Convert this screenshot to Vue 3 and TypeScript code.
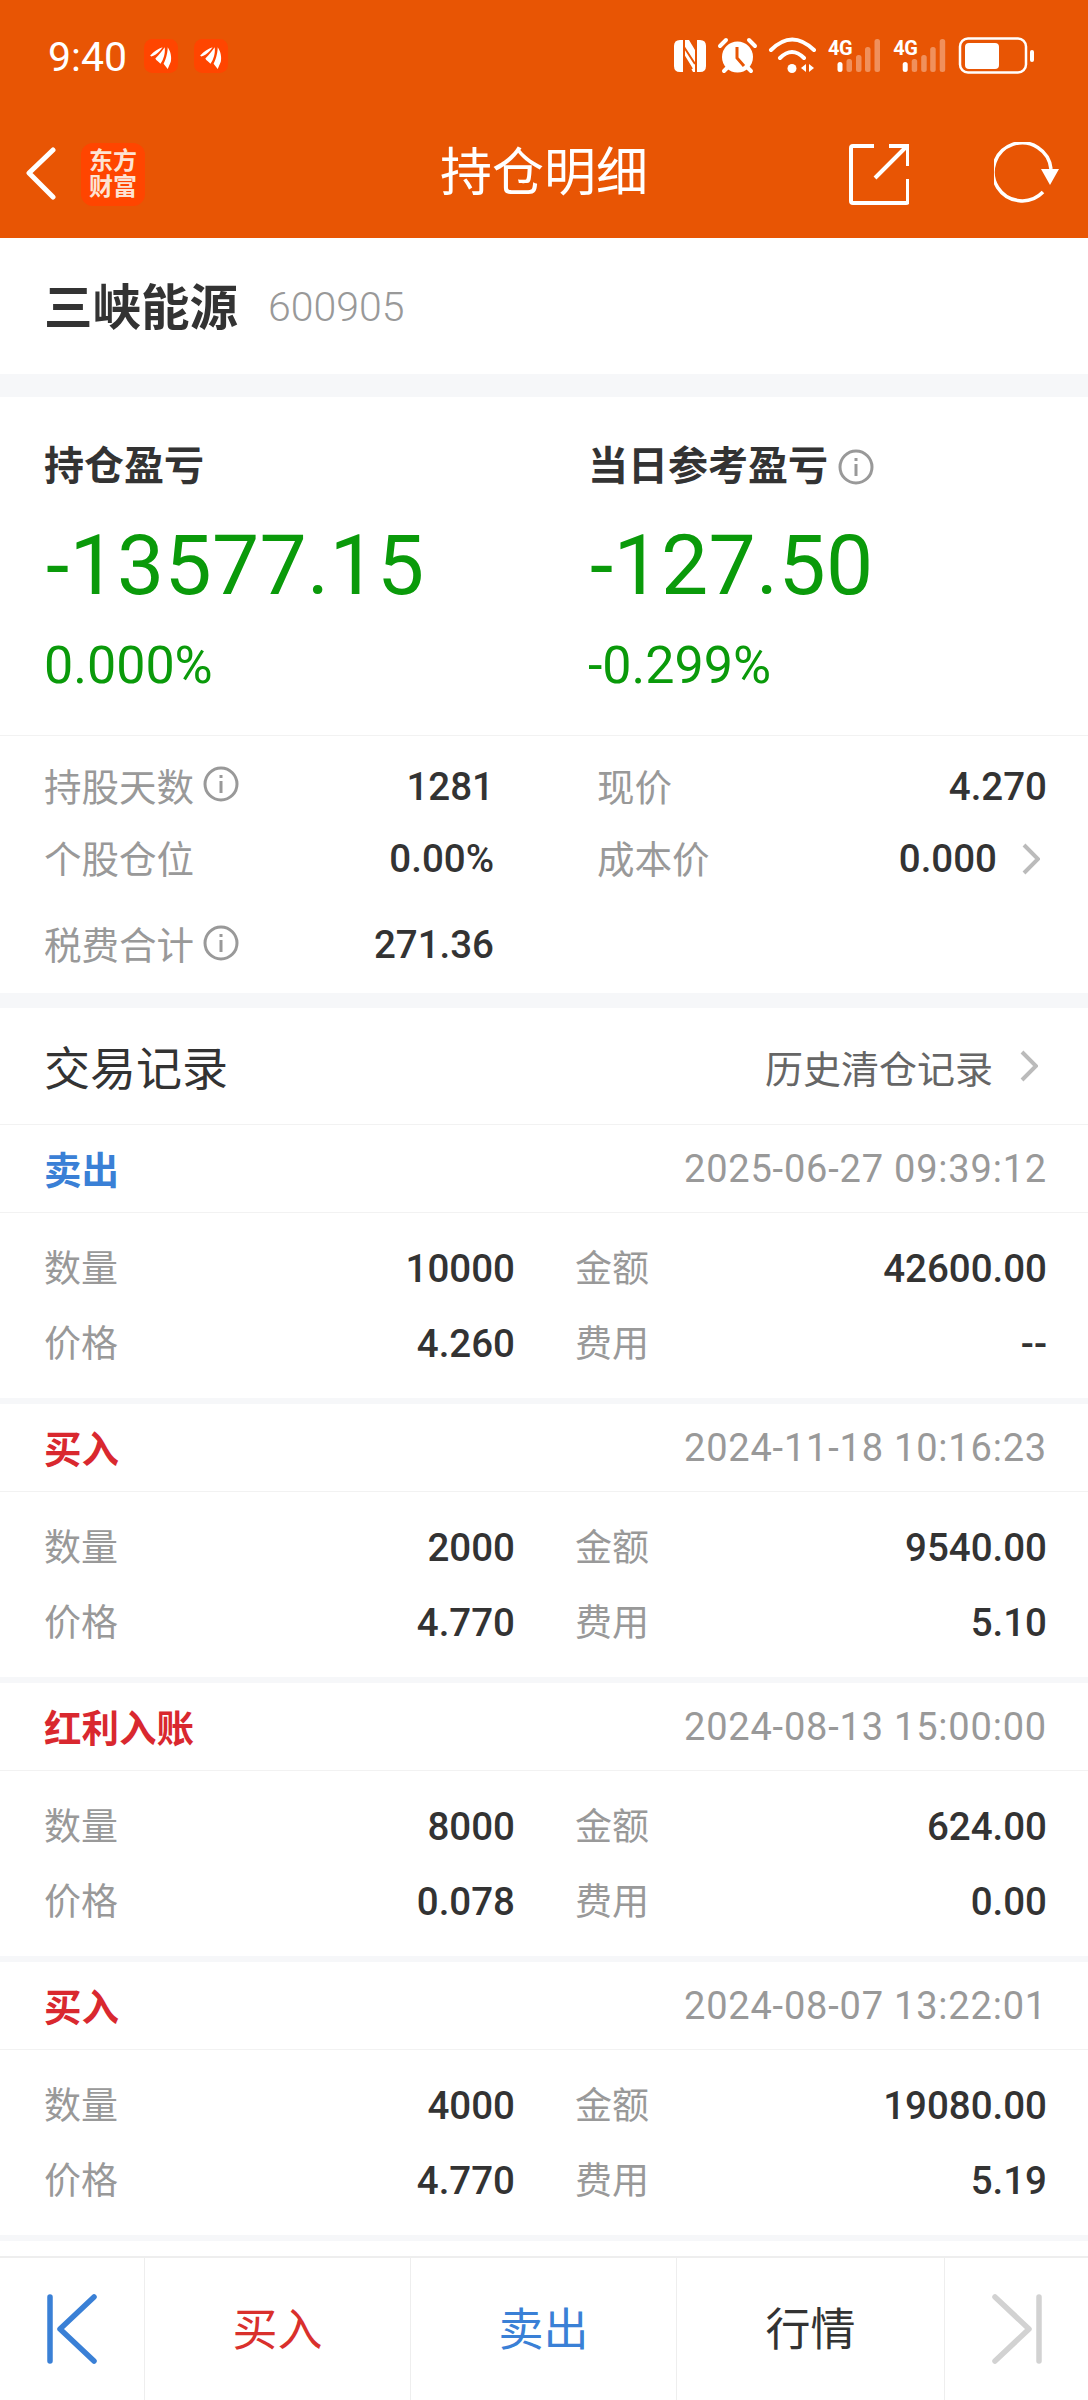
<script setup lang="ts">
interface Trade {
  type: string
  kind: 'buy' | 'sell'
  time: string
  qty: string
  amount: string
  price: string
  fee: string
}

const trades: Trade[] = [
  { type: '卖出', kind: 'sell', time: '2025-06-27 09:39:12', qty: '10000', amount: '42600.00', price: '4.260', fee: '--' },
  { type: '买入', kind: 'buy', time: '2024-11-18 10:16:23', qty: '2000', amount: '9540.00', price: '4.770', fee: '5.10' },
  { type: '红利入账', kind: 'buy', time: '2024-08-13 15:00:00', qty: '8000', amount: '624.00', price: '0.078', fee: '0.00' },
  { type: '买入', kind: 'buy', time: '2024-08-07 13:22:01', qty: '4000', amount: '19080.00', price: '4.770', fee: '5.19' }
]

// 信号格的 x 偏移
const signalOffsets = [0, 65.2]
</script>

<template>
  <div class="page">
    <header class="top">
      <div class="status">
        <span class="clock">9:40</span>
        <svg v-for="n in 2" :key="n" class="notify" viewBox="0 0 33 33">
          <rect width="33" height="33" rx="8" fill="#ff4500" />
          <path d="M6 16C10 12 14 9 18 8C16 11 13 15 7 17Z" fill="#fff" />
          <path d="M11 19C15 15 18 11 20 8C21 13 19 20 16 24C14 22 12 21 11 19Z" fill="#fff" />
          <path d="M19 24C22 18 23 12 23 8C26 12 27 18 26 22L23 29Z" fill="#fff" />
        </svg>
        <svg class="status-icons" viewBox="668 32 368 48">
          <!-- NFC -->
          <path d="M680 40h3v32h-3q-6 0-6-6V46q0-6 6-6Z" fill="#fff" />
          <path d="M700 40h-3v32h3q6 0 6-6V46q0-6-6-6Z" fill="#fff" />
          <path d="M685 40h4l6 10v22h-2l-8-14Z" fill="#fff" />
          <path d="M684 47l11 17M684 56l8 13" stroke="#e85504" stroke-width="2" fill="none" />
          <!-- alarm -->
          <circle cx="737.5" cy="57" r="15.5" fill="#fff" />
          <path d="M737 47v11l7 8" stroke="#e85504" stroke-width="3" fill="none" />
          <path d="M720 46l6-6M749 40l6 6M724 71l4-4M751 71l-4-4" stroke="#fff" stroke-width="4" stroke-linecap="round" />
          <!-- wifi -->
          <path d="M771 50Q792 29 814 50M780 58Q792 46 804 58" stroke="#fff" stroke-width="4" stroke-linecap="round" fill="none" />
          <circle cx="792" cy="68.5" r="4.5" fill="#fff" />
          <path d="M806 64v8l-5-4ZM809 64v8l5-4Z" fill="#fff" />
          <!-- 4G + signal -->
          <g v-for="dx in signalOffsets" :key="dx" :transform="`translate(${dx} 0)`">
            <text x="828" y="55" class="net">4G</text>
            <rect x="837.5" y="62" width="5" height="10" rx="2.5" fill="#fff" />
            <g fill="#fff" opacity="0.35">
              <rect x="846.5" y="59" width="5.5" height="13" rx="2.5" />
              <rect x="856" y="55" width="5.5" height="17" rx="2.5" />
              <rect x="865" y="47" width="5.5" height="25" rx="2.5" />
              <rect x="874.5" y="39" width="5.5" height="33" rx="2.5" />
            </g>
          </g>
          <!-- battery -->
          <rect x="960" y="38.5" width="66" height="34" rx="8" fill="none" stroke="#fff" stroke-width="2.5" />
          <rect x="965" y="43" width="34" height="26" rx="4" fill="#fff" />
          <rect x="1030" y="50" width="4" height="12" rx="2" fill="#fff" />
        </svg>
      </div>
      <nav class="nav">
        <div class="nav-left">
          <svg class="back" viewBox="0 0 30 54">
            <path d="M27 3L3 26L27 50" fill="none" stroke="#fff" stroke-width="5" stroke-linecap="round" stroke-linejoin="round" />
          </svg>
          <div class="logo"><span>东方</span><span>财富</span></div>
        </div>
        <div class="nav-title">持仓明细</div>
        <div class="nav-right">
          <svg class="share" viewBox="0 0 60 62">
            <path d="M25 3H4Q2 3 2 5V58Q2 60 4 60H57Q59 60 59 58V36" fill="none" stroke="#fff" stroke-width="4" />
            <path d="M26 35L58 3M40 3H59V23" fill="none" stroke="#fff" stroke-width="4" />
          </svg>
          <svg class="refresh" viewBox="0 0 66 64">
            <path d="M49 50A29 29 0 1 1 57 27" fill="none" stroke="#fff" stroke-width="3.5" />
            <path d="M47 27H65L56 43Z" fill="#fff" />
          </svg>
        </div>
      </nav>
    </header>

    <section class="name-row">
      <span class="stock-name">三峡能源</span>
      <span class="stock-code">600905</span>
    </section>

    <section class="summary">
      <div class="summary-col">
        <div class="summary-label">持仓盈亏</div>
        <div class="big">-13577.15</div>
        <div class="pct">0.000%</div>
      </div>
      <div class="summary-col">
        <div class="summary-label">
          当日参考盈亏
          <svg class="info" viewBox="0 0 36 36">
            <circle cx="18" cy="18" r="16" />
            <path d="M18 15v12M18 9v3" />
          </svg>
        </div>
        <div class="big">-127.50</div>
        <div class="pct">-0.299%</div>
      </div>
    </section>

    <section class="stats">
      <div class="stat">
        <span class="stat-label">持股天数
          <svg class="info" viewBox="0 0 36 36"><circle cx="18" cy="18" r="16" /><path d="M18 15v12M18 9v3" /></svg>
        </span>
        <span class="num">1281</span>
      </div>
      <div class="stat">
        <span class="stat-label">现价</span>
        <span class="num">4.270</span>
      </div>
      <div class="stat">
        <span class="stat-label">个股仓位</span>
        <span class="num">0.00%</span>
      </div>
      <div class="stat">
        <span class="stat-label">成本价</span>
        <span class="num with-chevron">0.000
          <svg class="chevron" viewBox="0 0 18 32"><path d="M2 2L16 16L2 30" /></svg>
        </span>
      </div>
      <div class="stat stat-tax">
        <span class="stat-label">税费合计
          <svg class="info" viewBox="0 0 36 36"><circle cx="18" cy="18" r="16" /><path d="M18 15v12M18 9v3" /></svg>
        </span>
        <span class="num">271.36</span>
      </div>
    </section>

    <section class="records">
      <div class="records-head">
        <span class="records-title">交易记录</span>
        <span class="records-link">历史清仓记录
          <svg class="chevron" viewBox="0 0 18 32"><path d="M2 2L16 16L2 30" /></svg>
        </span>
      </div>
      <article v-for="item in trades" :key="item.time" class="trade">
        <div class="trade-head">
          <span class="trade-type" :class="item.kind">{{ item.type }}</span>
          <span class="trade-time">{{ item.time }}</span>
        </div>
        <div class="trade-body">
          <div class="cell"><span class="cell-label">数量</span><span class="num">{{ item.qty }}</span></div>
          <div class="cell"><span class="cell-label">金额</span><span class="num">{{ item.amount }}</span></div>
          <div class="cell"><span class="cell-label">价格</span><span class="num">{{ item.price }}</span></div>
          <div class="cell"><span class="cell-label">费用</span><span class="num">{{ item.fee }}</span></div>
        </div>
      </article>
    </section>

    <footer class="bar">
      <div class="bar-cell">
        <svg class="step" viewBox="0 0 50 70">
          <path d="M3 3V67M47 3L13 35L47 67" fill="none" stroke="#3a80d6" stroke-width="5.5" stroke-linecap="round" stroke-linejoin="round" />
        </svg>
      </div>
      <div class="bar-cell buy"><span>买入</span></div>
      <div class="bar-cell sell"><span>卖出</span></div>
      <div class="bar-cell"><span>行情</span></div>
      <div class="bar-cell">
        <svg class="step" viewBox="0 0 50 70">
          <path d="M47 3V67M3 3L37 35L3 67" fill="none" stroke="#d2d2d2" stroke-width="5.5" stroke-linecap="round" stroke-linejoin="round" />
        </svg>
      </div>
    </footer>
  </div>
</template>

<style>
body {
  background: #fff;
}
</style>

<style scoped>
.page,
.page * {
  box-sizing: border-box;
}
.page {
  width: 1088px;
  height: 2400px;
  overflow: hidden;
  background: #fff;
  color: #333;
  font-family: Roboto, "Noto Sans CJK SC", sans-serif;
}
.top {
  height: 238px;
  background: #e85504;
  color: #fff;
}
.status {
  height: 110px;
  padding: 0 52px 0 48px;
  display: flex;
  align-items: center;
}
.clock {
  font-size: 41px;
  width: 96px;
  padding-top: 4px;
}
.notify {
  width: 34px;
  height: 34px;
  margin-right: 16px;
  margin-top: 2px;
}
.status-icons {
  width: 368px;
  height: 48px;
  margin-left: auto;
  margin-top: 2px;
}
.net {
  font-size: 20px;
  font-weight: 700;
  fill: #fff;
  font-family: Roboto, sans-serif;
  letter-spacing: -0.5px;
}
.nav {
  height: 128px;
  display: grid;
  grid-template-columns: 1fr auto 1fr;
  align-items: center;
}
.nav-left {
  display: flex;
  align-items: center;
  padding-left: 26px;
}
.back {
  width: 30px;
  height: 54px;
}
.logo {
  width: 64px;
  height: 63px;
  margin-left: 25px;
  border-radius: 12px;
  background: #ff4500;
  color: #fde3d4;
  font-size: 24px;
  font-weight: 700;
  line-height: 26px;
  display: flex;
  flex-direction: column;
  align-items: center;
  justify-content: center;
}
.nav-title {
  font-size: 52px;
  line-height: 70px;
}
.nav-right {
  display: flex;
  justify-content: flex-end;
  align-items: center;
  padding-right: 28px;
  gap: 85px;
}
.share {
  width: 60px;
  height: 62px;
}
.refresh {
  width: 66px;
  height: 64px;
}
.name-row {
  height: 136px;
  padding: 0 44px;
  display: flex;
  align-items: center;
}
.stock-name {
  font-size: 48.5px;
  font-weight: 700;
  margin-bottom: 5px;
}
.stock-code {
  margin-left: 30px;
  margin-top: 2px;
  font-size: 41px;
  font-weight: 300;
  color: #999;
}
.summary {
  border-top: 23px solid #f6f7f9;
  border-bottom: 1px solid #f2f2f2;
  height: 362px;
  padding: 45px 0 0 44px;
  display: grid;
  grid-template-columns: 544px 1fr;
}
.summary-label {
  font-size: 40px;
  font-weight: 700;
  line-height: 50px;
  display: flex;
  align-items: center;
  gap: 10px;
}
.big {
  margin-top: 24px;
  padding-left: 2px;
  font-size: 84px;
  letter-spacing: 0.3px;
  line-height: 100px;
  color: #0a9a0a;
}
.pct {
  margin-top: 20px;
  font-size: 52px;
  line-height: 60px;
  color: #0a9a0a;
}
.info {
  width: 36px;
  height: 36px;
  fill: none;
  stroke: #999;
  stroke-width: 3;
}
.stats {
  height: 257px;
  padding: 13px 41px 0 44px;
  display: grid;
  grid-template-columns: 450px 450px;
  column-gap: 103px;
  grid-template-rows: 72px 73px 73px;
}
.stat {
  display: flex;
  align-items: center;
  justify-content: space-between;
}
.stat .num {
  padding-top: 2px;
}
.stat-tax {
  margin-top: 13px;
  margin-bottom: -13px;
}
.stat-label {
  font-size: 37.5px;
  color: #999;
  display: flex;
  align-items: center;
  gap: 9px;
  padding-bottom: 2px;
}
.num {
  font-size: 38.5px;
  font-weight: 500;
  color: #333;
}
.with-chevron {
  display: flex;
  align-items: center;
  gap: 25px;
  padding-right: 7px;
}
.chevron {
  width: 18px;
  height: 32px;
  fill: none;
  stroke: #bbb;
  stroke-width: 4;
}
.records {
  border-top: 15px solid #f6f7f9;
}
.records-head {
  height: 117px;
  padding: 0 50px 0 44px;
  display: flex;
  align-items: center;
  justify-content: space-between;
  border-bottom: 1px solid #f2f2f2;
}
.records-title {
  font-size: 46px;
  padding-bottom: 3px;
}
.records-link {
  font-size: 38px;
  color: #666;
  display: flex;
  align-items: center;
  gap: 27px;
}
.trade {
  height: 279px;
  border-bottom: 6px solid #f6f7f9;
}
.trade-head {
  height: 88px;
  padding: 0 41px 0 44px;
  display: flex;
  align-items: center;
  justify-content: space-between;
  border-bottom: 1px solid #f2f2f2;
}
.trade-type {
  font-size: 37.5px;
  font-weight: 700;
  padding-bottom: 3px;
}
.trade-type.buy {
  color: #d9282f;
}
.trade-type.sell {
  color: #3a80d6;
}
.trade-time {
  font-size: 38px;
  color: #999;
  letter-spacing: 0.8px;
}
.trade-body {
  padding: 18px 41px 0 44px;
  display: grid;
  grid-template-columns: 471px 472px;
  column-gap: 60px;
  grid-auto-rows: 75px;
}
.cell {
  display: flex;
  align-items: center;
  justify-content: space-between;
}
.cell-label {
  font-size: 37px;
  color: #999;
  padding-bottom: 5px;
}
.bar {
  margin-top: 15px;
  height: 144px;
  border-top: 2px solid #eee;
  display: grid;
  grid-template-columns: 145px 266px 266px 268px 143px;
}
.bar-cell {
  display: flex;
  align-items: center;
  justify-content: center;
  border-right: 1px solid #eee;
  font-size: 45px;
  color: #333;
}
.bar-cell span {
  padding-bottom: 6px;
}
.bar-cell:last-child {
  border-right: 0;
}
.bar-cell.buy {
  color: #d9302c;
}
.bar-cell.sell {
  color: #3a80d6;
}
.step {
  width: 50px;
  height: 70px;
}
</style>
